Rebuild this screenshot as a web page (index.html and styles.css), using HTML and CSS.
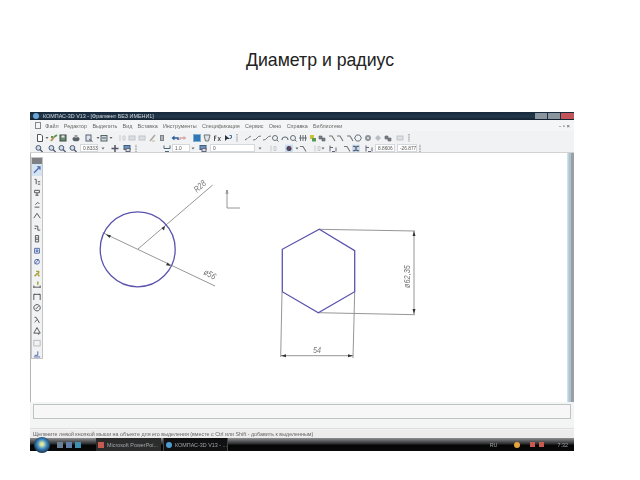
FILE: index.html
```html
<!DOCTYPE html>
<html lang="ru">
<head>
<meta charset="utf-8">
<title>Диаметр и радиус</title>
<link rel="stylesheet" href="styles.css">
</head>
<body>
<svg class="sprite" aria-hidden="true">
  <symbol id="mag" viewBox="0 0 8 8"><circle cx="3.4" cy="3.4" r="2.4" fill="#cfdcea" stroke="#4f5a70"/><path d="M5 5 7.6 7.6" stroke="#4f5a70" stroke-width="1.3"/></symbol>
  <symbol id="doc" viewBox="0 0 8 8"><path d="M1.5.5h3.5l1.5 1.5v5.500h-5Z" fill="#fff" stroke="#555"/></symbol>
  <symbol id="col" viewBox="0 0 8 8"><path d="M1 7 4 3" stroke="#b9914a" stroke-width="2"/><path d="M4 3 7 1" stroke="#5f9a56" stroke-width="2"/><path d="M1 3h2" stroke="#6a8f4a" stroke-width="2"/></symbol>
  <symbol id="save" viewBox="0 0 8 8"><rect x="1" y="1" width="6" height="6" fill="#6c8a70" stroke="#3d4a42"/><rect x="2.500" y="1.500" width="3" height="2" fill="#e5e8e5"/></symbol>
  <symbol id="print" viewBox="0 0 8 8"><ellipse cx="4" cy="5" rx="3.500" ry="2.300" fill="#5b5f66"/><rect x="2.500" y="1" width="3" height="3" fill="#9a9ea5"/></symbol>
  <symbol id="prev" viewBox="0 0 8 8"><rect x="1" y="1" width="5" height="6" fill="#dfe6ee" stroke="#5a6270"/><path d="M4 5 7.500 7.500" stroke="#5a6270"/></symbol>
  <symbol id="paste" viewBox="0 0 8 8"><rect x="1" y="1.500" width="6" height="5.500" fill="#cfd6dd" stroke="#566"/><path d="M2 4h4" stroke="#566"/></symbol>
  <symbol id="dd" viewBox="0 0 8 8"><path d="M2.500 3h3L4 5Z" fill="#666"/></symbol>
  <symbol id="fa" viewBox="0 0 8 8"><path d="M2 1v6M5 2h2v4H5Z" stroke="#c8cbd0" fill="none"/></symbol>
  <symbol id="fb" viewBox="0 0 8 8"><rect x="1" y="2" width="6" height="4" fill="#dcdfe3" stroke="#c2c5ca"/></symbol>
  <symbol id="pen" viewBox="0 0 8 8"><path d="M1 7 6 1" stroke="#a9a9a0" stroke-width="1.500"/><path d="M3 7h3" stroke="#c9b98a"/></symbol>
  <symbol id="pad" viewBox="0 0 8 8"><rect x="2" y="1" width="4" height="6" fill="#7c828a"/><path d="M3 3h2M3 5h2" stroke="#e6e6e6"/></symbol>
  <symbol id="undo" viewBox="0 0 8 8"><path d="M7 6V4H2" fill="none" stroke="#2d5d98" stroke-width="1.500"/><path d="M3.500 1.500 .5 4l3 2.500Z" fill="#2d5d98"/></symbol>
  <symbol id="redo" viewBox="0 0 8 8"><path d="M1 6V4h4" fill="none" stroke="#d8a5a5" stroke-width="1.300"/><path d="M4.500 2 7.500 4l-3 2Z" fill="#d8a5a5"/></symbol>
  <symbol id="bsq" viewBox="0 0 8 8"><rect x=".5" y=".5" width="7" height="7" fill="#2f78b5" stroke="#7faccd"/></symbol>
  <symbol id="cup" viewBox="0 0 8 8"><path d="M1 1h6L5.500 7h-3Z" fill="#dfe4e6" stroke="#6d7478"/></symbol>
  <symbol id="fx" viewBox="0 0 8 8"><path d="M1.500 7V2h2M1 4h2M5 3l2.500 4M7.500 3 5 7" fill="none" stroke="#555"/></symbol>
  <symbol id="nk" viewBox="0 0 8 8"><path d="M1 1v6l2-2 3 0Z" fill="#2d3238"/><path d="M5.500 1.500h2V4H6.300v1" fill="none" stroke="#3d70a8"/></symbol>
  <symbol id="ln" viewBox="0 0 8 8"><path d="M1 6 7 2" stroke="#666" stroke-dasharray="3 1"/></symbol>
  <symbol id="ln2" viewBox="0 0 8 8"><path d="M0 6q3 0 4-2t4-2" fill="none" stroke="#777"/></symbol>
  <symbol id="cir" viewBox="0 0 8 8"><circle cx="4" cy="4" r="2.500" fill="none" stroke="#66707a"/><path d="M6 6l1.500 1.500" stroke="#66707a"/></symbol>
  <symbol id="arc" viewBox="0 0 8 8"><path d="M1 6a3 3 0 0 1 6 0" fill="none" stroke="#66707a" stroke-width="1.200"/></symbol>
  <symbol id="bar" viewBox="0 0 8 8"><path d="M1.500 1v6M4 1v6M6.500 1v6M0 4h8" stroke="#6a7078"/></symbol>
  <symbol id="yel" viewBox="0 0 8 8"><rect x="1" y="1" width="4" height="4" fill="#c9c23a"/><rect x="3" y="4" width="4" height="3.500" fill="#5a9a50"/></symbol>
  <symbol id="blk" viewBox="0 0 8 8"><path d="M1 2h3v3H1ZM4 4h3v3H4Z" fill="#7a8088" stroke="#5a6068" stroke-width=".6"/></symbol>
  <symbol id="ang" viewBox="0 0 8 8"><path d="M1 2h3l3 5" fill="none" stroke="#777" stroke-width="1.100"/></symbol>
  <symbol id="hex" viewBox="0 0 8 8"><path d="M2.500 1h3L7.500 4 5.500 7h-3L.5 4Z" fill="none" stroke="#66707a"/></symbol>
  <symbol id="gear" viewBox="0 0 8 8"><circle cx="4" cy="4" r="3" fill="#8e9498"/><circle cx="4" cy="4" r="1" fill="#e8e8e8"/></symbol>
  <symbol id="dia" viewBox="0 0 8 8"><path d="M4 1 7 4 4 7 1 4Z" fill="#b8bec4"/></symbol>
  <symbol id="sep" viewBox="0 0 8 8"><path d="M4 0v8" stroke="#a5a5a5" stroke-width="1.500" stroke-dasharray="1 .6"/></symbol>
  <symbol id="move" viewBox="0 0 8 8"><path d="M4 .5v7M.5 4h7" stroke="#556" stroke-width="1.500"/></symbol>
  <symbol id="blue2" viewBox="0 0 8 8"><rect x="1" y="1" width="6" height="4" fill="#6d94bb" stroke="#3e5f80"/><rect x="3" y="4" width="4" height="3" fill="#d8dfe6" stroke="#667"/></symbol>
  <symbol id="sn" viewBox="0 0 8 8"><path d="M1 1v3h6V1M2 7h4" fill="none" stroke="#4d6478"/></symbol>
  <symbol id="hl" viewBox="0 0 8 8"><rect width="8" height="8" fill="#c8dcee"/><circle cx="4" cy="4" r="2.500" fill="#3d3f58"/><path d="M2.500 5.500l3-3" stroke="#d45" stroke-width=".8"/></symbol>
  <symbol id="hl2" viewBox="0 0 8 8"><rect width="8" height="8" fill="#c8dcee"/><path d="M1 2h6M1 6h6M2 1l4 6M6 1 2 7" stroke="#445" stroke-width=".7"/></symbol>
  <symbol id="tk" viewBox="0 0 8 8"><path d="M1 1v6M7 3v4M3 7h3M1 3h3" stroke="#667"/></symbol>
</svg>
<h1 class="slide-title">Диаметр и радиус</h1>
<div class="shot">
  <div class="titlebar">
    <span class="app-dot"></span>
    <span class="app-name">КОМПАС-3D V13 - [Фрагмент БЕЗ ИМЕНИ1]</span>
    <span class="win-btns"><i class="wb"></i><i class="wb"></i><i class="wb wb-close"></i></span>
  </div>
  <div class="menubar">
    <span class="doc-ic"></span>
    <span>Файл</span><span>Редактор</span><span>Выделить</span><span>Вид</span><span>Вставка</span><span>Инструменты</span><span>Спецификация</span><span>Сервис</span><span>Окно</span><span>Справка</span><span>Библиотеки</span>
    <span class="mdi">- ▫ ×</span>
  </div>
  <div class="tools tools-1">
    <svg class="row1" viewBox="30 0 400 13" aria-hidden="true">
      <use href="#doc" x="36" y="3" width="8" height="8"/><use href="#dd" x="43" y="3" width="8" height="8"/><use href="#col" x="50" y="3" width="8" height="8"/><use href="#save" x="59" y="3" width="8" height="8"/><use href="#print" x="72" y="3" width="8" height="8"/><use href="#prev" x="85" y="3" width="8" height="8"/><use href="#dd" x="94" y="3" width="8" height="8"/><use href="#paste" x="100" y="3" width="8" height="8"/><use href="#dd" x="107" y="3" width="8" height="8"/><use href="#fa" x="118" y="3" width="8" height="8"/><use href="#fb" x="128" y="3" width="8" height="8"/><use href="#fb" x="138" y="3" width="8" height="8"/><use href="#pen" x="149" y="3" width="8" height="8"/><use href="#pad" x="158" y="3" width="8" height="8"/>
      <use href="#undo" x="171" y="3" width="8" height="8"/><use href="#redo" x="179" y="3" width="8" height="8"/><use href="#bsq" x="193" y="3" width="8" height="8"/><use href="#cup" x="203" y="3" width="8" height="8"/><use href="#fx" x="213" y="3" width="8" height="8"/><use href="#nk" x="224" y="3" width="8" height="8"/><use href="#sep" x="233" y="3" width="8" height="8"/>
      <use href="#ln" x="244" y="3" width="8" height="8"/><use href="#ln2" x="253" y="3" width="8" height="8"/><use href="#ln2" x="263" y="3" width="8" height="8"/><use href="#cir" x="271" y="3" width="8" height="8"/><use href="#arc" x="281" y="3" width="8" height="8"/><use href="#cir" x="289" y="3" width="8" height="8"/><use href="#bar" x="299" y="3" width="8" height="8"/><use href="#yel" x="309" y="3" width="8" height="8"/><use href="#blk" x="318" y="3" width="8" height="8"/><use href="#ang" x="328" y="3" width="8" height="8"/><use href="#ang" x="336" y="3" width="8" height="8"/><use href="#ang" x="346" y="3" width="8" height="8"/><use href="#hex" x="354" y="3" width="8" height="8"/><use href="#gear" x="364" y="3" width="8" height="8"/><use href="#dia" x="374" y="3" width="8" height="8"/><use href="#blk" x="384" y="3" width="8" height="8"/><use href="#fb" x="396" y="3" width="8" height="8"/><use href="#sep" x="405" y="3" width="8" height="8"/>
    </svg>
  </div>
  <div class="tools tools-2">
    <svg class="seg sa" viewBox="30 0 50 9" aria-hidden="true"><use href="#mag" x="35" y=".5" width="8" height="8"/><use href="#mag" x="48" y=".5" width="8" height="8"/><use href="#mag" x="58" y=".5" width="8" height="8"/><use href="#mag" x="69" y=".5" width="8" height="8"/></svg>
    <span class="field fa">0.8333</span>
    <svg class="seg sb" viewBox="98 0 74 9" aria-hidden="true"><use href="#dd" x="99" y=".5" width="8" height="8"/><use href="#move" x="111" y=".5" width="8" height="8"/><use href="#blue2" x="123" y=".5" width="8" height="8"/><use href="#sep" x="132" y=".5" width="8" height="8"/><use href="#sn" x="163" y=".5" width="8" height="8"/></svg>
    <span class="field fa">1.0</span>
    <svg class="seg sc" viewBox="190 0 20 9" aria-hidden="true"><use href="#dd" x="189" y=".5" width="8" height="8"/><use href="#blue2" x="199" y=".5" width="8" height="8"/></svg>
    <span class="field fc">0</span>
    <svg class="seg sd" viewBox="255 0 120 9" aria-hidden="true"><use href="#dd" x="256" y=".5" width="8" height="8"/><use href="#fa" x="269" y=".5" width="8" height="8"/><use href="#hl" x="285" y=".5" width="8" height="8"/><use href="#dd" x="293" y=".5" width="8" height="8"/><use href="#ang" x="299" y=".5" width="8" height="8"/><use href="#fa" x="313" y=".5" width="8" height="8"/><use href="#dd" x="319" y=".5" width="8" height="8"/><use href="#tk" x="329" y=".5" width="8" height="8"/><use href="#ang" x="343" y=".5" width="8" height="8"/><use href="#hl2" x="352" y=".5" width="8" height="8"/><use href="#tk" x="365" y=".5" width="8" height="8"/></svg>
    <span class="field fa fn">8.8606</span>
    <span class="field fa fn">-26.877</span>
    <svg class="seg se" viewBox="415 0 8 9" aria-hidden="true"><use href="#sep" x="414" y=".5" width="8" height="8"/></svg>
  </div>
  <div class="canvas">
    <svg class="drawing" viewBox="30 153 538 249" aria-hidden="true">
      <g class="thin">
        <path d="M138 249 212.7 185M102.7 232.7 215 286"/>
        <path d="M227 190V208H240M227 190l-1 4M227 190l1 4"/>
        <path d="M319 229.3 415 231M318 312.7 415 314.7M414 231V314M282 292 280.7 357M354.7 292 353 358M281 355.7H353"/>
      </g>
      <circle class="blue" cx="137.7" cy="249.3" r="37.5"/>
      <path class="blue" d="M319.3 229.3 354.7 250.7V291.7L318.3 312.7 282.3 291.700V249.300Z"/>
      <g class="arrow">
        <path d="M106 234.500l5 .7-1.500 2.800ZM171 266l-5-.7 1.500-2.800Z"/>
        <path d="M165 226l-1 4.500-2.500-2.500ZM414 231l-1.500 5h3ZM414 314l-1.500-5h3ZM281 355.700l5-1.500v3ZM353 355.700l-5-1.500v3Z"/>
      </g>
      <text class="dim" transform="translate(197 193) rotate(-42) scale(.8 1)">R28</text>
      <text class="dim" transform="translate(203 274) rotate(28) scale(.8 1)">ø56</text>
      <text class="dim" transform="translate(410 288) rotate(-90) scale(.82 1)">ø62,35</text>
      <text class="dim" transform="translate(313 353) scale(.8 1)">54</text>
    </svg>
    <div class="scrollbar"></div>
    <div class="side-tools">
      <div class="side-head"></div>
      <svg class="ti ti-on" viewBox="0 0 10 10"><path class="blue-i" d="M2 8 8 2M5 2h3v3"/></svg>
      <svg class="ti" viewBox="0 0 10 10"><path d="M2 2h2v6M6 5h3M6 8h3"/></svg>
      <svg class="ti" viewBox="0 0 10 10"><path d="M2 2h6v3H2ZM5 5v4M3 8h4"/></svg>
      <svg class="ti" viewBox="0 0 10 10"><path d="M2 8h6M3 5l3-3 2 2"/></svg>
      <svg class="ti" viewBox="0 0 10 10"><path d="M1 8 5 2l4 6"/></svg>
      <svg class="ti" viewBox="0 0 10 10"><path d="M2 3h4M6 3v5h3M2 6h2"/></svg>
      <svg class="ti" viewBox="0 0 10 10"><path d="M3 1h4v8H3ZM4 4h2M4 6h2"/></svg>
      <svg class="ti" viewBox="0 0 10 10"><path class="blue-i" d="M2 2h6v6H2ZM4 4h2v2H4Z"/></svg>
      <svg class="ti" viewBox="0 0 10 10"><path class="blue-i" d="M2 5a3 3 0 1 0 6 0 3 3 0 1 0-6 0M2 8l5-6"/></svg>
      <svg class="ti" viewBox="0 0 10 10"><path class="olive-i" d="M2 8 6 4M4 2h3v3M6 6l2 2"/></svg>
      <svg class="ti" viewBox="0 0 10 10"><path class="olive-i" d="M6 1v4"/><path d="M1 8h8M1 6v3M9 6v3"/></svg>
      <svg class="ti" viewBox="0 0 10 10"><path d="M1 9V2h8v7M1 2h2M7 2h2"/></svg>
      <svg class="ti" viewBox="0 0 10 10"><path d="M5 1a4 4 0 1 0 .1 0M3 7l4-4"/></svg>
      <svg class="ti" viewBox="0 0 10 10"><path d="M2 2h2l4 7M2 8l3-3"/></svg>
      <svg class="ti" viewBox="0 0 10 10"><path d="M5 1 1 8h8ZM7 8v2"/></svg>
      <svg class="ti ti-faint" viewBox="0 0 10 10"><path d="M1 2h8v7H1Z"/></svg>
      <svg class="ti" viewBox="0 0 10 10"><path class="blue-i" d="M1 9h8M2 7h4M6 2v5"/></svg>
    </div>
  </div>
  <div class="props">
    <div class="props-box"></div>
    <div class="props-strip"></div>
  </div>
  <div class="status">Щелкните левой кнопкой мыши на объекте для его выделения (вместе с Ctrl или Shift - добавить к выделенным)</div>
  <div class="taskbar">
    <span class="orb"></span>
    <span class="ql q1"></span><span class="ql q2"></span><span class="ql q3"></span>
    <span class="task"><i class="task-ic t-red"></i>Microsoft PowerPoi...</span>
    <span class="task task-on"><i class="task-ic t-blue"></i>КОМПАС-3D V13 - ...</span>
    <span class="tray">RU<i class="tray-ic t-sun"></i><i class="tray-ic t-red"></i><i class="tray-ic t-red"></i><b>7:32</b></span>
  </div>
</div>
</body>
</html>
```
FILE: styles.css
```css
* { box-sizing: border-box; }
html, body { margin: 0; background: #fff; }
body { width: 640px; height: 480px; overflow: hidden; font-family: "Liberation Sans", Arial, sans-serif; }
.sprite { display: none; }

.slide-title {
  margin: 0; height: 112px; padding-top: 50px;
  font-size: 17.7px; line-height: 20px; font-weight: 400; text-align: center; color: #222;
}

.shot {
  width: 544px; height: 339px; margin-left: 30px;
  display: flex; flex-direction: column;
  background: #f2f3f4; color: #555;
}
.shot > * { flex: none; }

.titlebar {
  height: 8px; display: flex; align-items: center; padding-left: 3px;
  background: linear-gradient(#16283a, #24384c 60%, #12202e);
  filter: blur(.5px);
}
.app-dot { width: 6px; height: 6px; border-radius: 50%; background: #6aa6d8; margin-right: 4px; }
.app-name { font-size: 5.4px; color: #cfd6dc; white-space: nowrap; }
.win-btns { margin-left: auto; display: flex; }
.wb { width: 12px; height: 6px; background: #8b959e; margin-right: 1px; }
.wb-close { width: 13px; margin: 0; background: #c2545a; }

.menubar {
  height: 11px; display: flex; align-items: center; gap: 5.3px; padding: 0 4px 0 5px;
  font-size: 5.4px; white-space: nowrap; background: #f4f5f6; color: #666;
  filter: blur(.45px);
}
.doc-ic { width: 6px; height: 7px; border: 1px solid #888; margin-right: -1px; }
.mdi { margin-left: auto; font-size: 6px; color: #444; }

.tools { display: flex; align-items: center; filter: blur(.5px); background: #f1f2f4; }
.tools-1 { height: 13px; }
.tools-2 { height: 9px; border-bottom: 1px solid #d2d2d2; }
.row1 { display: block; width: 400px; height: 13px; }

.seg { display: block; flex: none; height: 9px; }
.sa { width: 50px; }
.sb { width: 74px; }
.sc { width: 20px; }
.sd { width: 120px; }
.se { width: 8px; }

.field {
  flex: none; height: 8px; padding-left: 2px; font-size: 4.8px; line-height: 7px;
  background: #fff; border: 1px solid #d5d8dd; color: #555; white-space: nowrap;
}
.fa { width: 18px; }
.fc { width: 45px; }
.fn { width: 20px; margin-right: 1px; }
.fn + .fn { margin-left: 1px; margin-right: 0; }

.canvas {
  position: relative; width: 100%; height: 249px;
  background: #fff; border-left: 1px solid #b5b5b5;
}
.drawing { position: absolute; left: -1px; top: 0; width: 538px; height: 249px; filter: blur(.35px); }
.thin path { fill: none; stroke: #8a8a8a; stroke-width: .9; }
.blue { fill: none; stroke: #5a54ad; stroke-width: 1.3; }
.arrow path { fill: #333; }
.dim { font: italic 9px "Liberation Sans", Arial, sans-serif; fill: #777; }
.scrollbar {
  position: absolute; right: 0; top: 0; width: 7px; height: 100%;
  background: linear-gradient(90deg, #dce6ec, #a9c4d2 35%, #a9c4d2 55%, #9b9ea3 60%);
  filter: blur(.3px);
}
.side-tools {
  position: absolute; left: 0; top: 4px; width: 12px; height: 202px;
  display: flex; flex-direction: column; align-items: center;
  background: #f1f2f3; border: 1px solid #c4c4c4; filter: blur(.45px);
}
.side-head { align-self: stretch; height: 6px; background: #7e8084; flex: none; }
.ti { flex: none; width: 8px; height: 11.5px; }
.ti path { fill: none; stroke: #555; stroke-width: 1.2; }
.ti .blue-i { stroke: #4d6aa8; }
.ti .olive-i { stroke: #a6a030; stroke-width: 1.8; }
.ti-on { background: #d5e4f2; width: 10px; }
.ti-faint path { stroke: #bbb; }

.props { height: 28px; padding: 2px 3px 0; background: #f3f4f4; }
.props-box { height: 15px; background: #f7f7f7; border: 1px solid #bfc3c5; }
.props-strip { height: 10px; margin: 0 -3px; border-bottom: 1px solid #dedede; }

.status {
  height: 8px; padding-left: 3px; font-size: 5.35px; line-height: 9px; white-space: nowrap;
  background: #ececec; color: #666; filter: blur(.45px);
}

.taskbar {
  height: 13px; display: flex; align-items: center;
  background: linear-gradient(#8d8f90, #2a2c2d 45%, #050505 55%, #0a0a0a);
  color: #a0a6aa; font-size: 5.4px; white-space: nowrap; filter: blur(.5px);
}
.orb {
  width: 16px; height: 16px; margin-left: 4px; border-radius: 50%; flex: none;
  background: radial-gradient(circle at 50% 45%, #d8e8a0 0 12%, #3d88c4 40%, #1b3a55 70%, #111 100%);
}
.ql { width: 6px; height: 6px; flex: none; margin-left: 3px; }
.q1 { margin-left: 7px; background: #6b7f92; }
.q2 { background: #5f7fa8; }
.q3 { background: #3f8fb0; margin-right: 15px; }
.task {
  width: 65px; height: 13px; margin-right: 2px; padding-left: 2px; display: flex; align-items: center; gap: 3px;
  flex: none; background: #2c2c2c;
}
.task-on { background: #111; border-left: 1px solid #444; border-right: 1px solid #444; }
.task-ic { width: 6px; height: 6px; flex: none; }
.t-red { background: #c65a50; }
.t-blue { background: #4f9bd0; border-radius: 50%; }
.tray { margin-left: auto; padding-right: 6px; display: flex; align-items: center; gap: 4px; }
.tray b { font-weight: 400; margin-left: 10px; }
.tray-ic { width: 5px; height: 5px; }
.t-sun { background: #e5a53c; border-radius: 50%; width: 6px; height: 6px; margin-left: 12px; margin-right: 6px; }
```
